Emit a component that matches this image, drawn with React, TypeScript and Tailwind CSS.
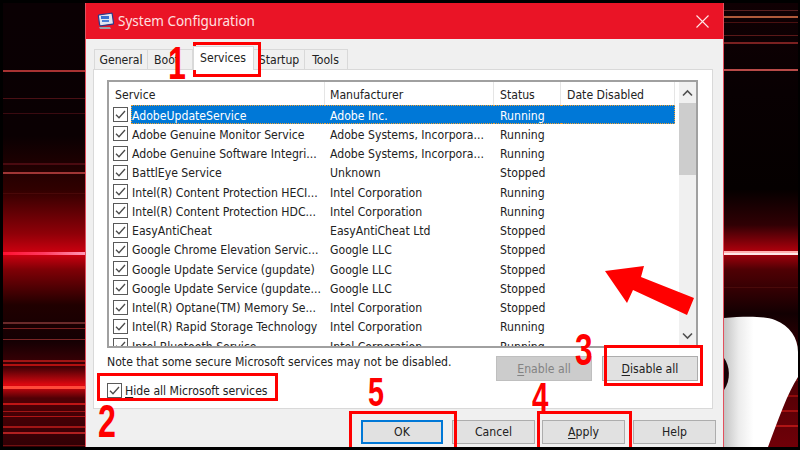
const rows: [string, string, string][] = [
  ["AdobeUpdateService", "Adobe Inc.", "Running"],
  ["Adobe Genuine Monitor Service", "Adobe Systems, Incorpora...", "Running"],
  ["Adobe Genuine Software Integri...", "Adobe Systems, Incorpora...", "Running"],
  ["BattlEye Service", "Unknown", "Stopped"],
  ["Intel(R) Content Protection HECI...", "Intel Corporation", "Running"],
  ["Intel(R) Content Protection HDC...", "Intel Corporation", "Running"],
  ["EasyAntiCheat", "EasyAntiCheat Ltd", "Stopped"],
  ["Google Chrome Elevation Servic...", "Google LLC", "Stopped"],
  ["Google Update Service (gupdate)", "Google LLC", "Stopped"],
  ["Google Update Service (gupdate...", "Google LLC", "Stopped"],
  ["Intel(R) Optane(TM) Memory Se...", "Intel Corporation", "Stopped"],
  ["Intel(R) Rapid Storage Technology", "Intel Corporation", "Running"],
  ["Intel Bluetooth Service", "Intel Corporation", "Running"],
];

function Check() {
  return (
    <span className="flex h-[15px] w-[15px] shrink-0 items-center justify-center border border-[#5a5a5a] bg-white">
      <svg width="13" height="13" viewBox="0 0 13 13" fill="none" stroke="#4a4a4a" strokeWidth="1.3">
        <path d="M2 6.8 5 9.8 11 3" />
      </svg>
    </span>
  );
}

function Wallpaper() {
  const left: [number, number, string][] = [
    [70, 2, "#a83232"], [98, 1, "#4a1015"], [113, 1, "#3a0a10"], [163, 2, "#4a0a10"], [172, 2, "#a03535"],
    [193, 1, "#4a0808"], [322, 2, "#6a2a2a"], [328, 1, "#7a2020"], [339, 1, "#7a2525"], [360, 2, "#a01515"],
    [364, 2, "#b01010"], [403, 2, "#c01515"], [411, 1, "#a01515"], [416, 1, "#b01515"], [426, 2, "#a01515"], [432, 2, "#b02020"], [445, 1, "#701010"],
  ];
  const right: [number, number, string][] = [
    [10, 1, "#5a2020"], [16, 2, "#b05a3a"], [22, 1, "#4a1010"], [35, 1, "#5a1818"], [42, 2, "#7a2020"], [69, 2, "#b84a48"],
    [287, 1, "#4a0a0a"], [380, 1, "#7a1010"], [395, 2, "#900c0c"], [410, 2, "#a01010"], [425, 2, "#b01515"],
  ];
  return (
    <svg className="absolute inset-0" width="800" height="450" viewBox="0 0 800 450">
      <defs>
        <linearGradient id="base" x1="0" y1="0" x2="0" y2="1">
          <stop offset="0" stopColor="#0a0003" />
          <stop offset="0.3" stopColor="#0a0002" />
          <stop offset="0.42" stopColor="#300000" />
          <stop offset="0.52" stopColor="#900008" />
          <stop offset="0.565" stopColor="#d00010" />
          <stop offset="0.6" stopColor="#800006" />
          <stop offset="0.68" stopColor="#200000" />
          <stop offset="0.76" stopColor="#140003" />
          <stop offset="0.82" stopColor="#400005" />
          <stop offset="0.86" stopColor="#e00810" />
          <stop offset="0.89" stopColor="#500005" />
          <stop offset="1" stopColor="#300005" />
        </linearGradient>
        <linearGradient id="baseR" x1="0" y1="0" x2="0" y2="1">
          <stop offset="0" stopColor="#100003" />
          <stop offset="0.2" stopColor="#080002" />
          <stop offset="0.42" stopColor="#050000" />
          <stop offset="0.5" stopColor="#300004" />
          <stop offset="0.56" stopColor="#b0000c" />
          <stop offset="0.6" stopColor="#500004" />
          <stop offset="0.7" stopColor="#120002" />
          <stop offset="0.85" stopColor="#500005" />
          <stop offset="1" stopColor="#700008" />
        </linearGradient>
        <linearGradient id="pink" x1="0" y1="0" x2="1" y2="0">
          <stop offset="0" stopColor="#ff1030" />
          <stop offset="0.5" stopColor="#ff3a60" />
          <stop offset="1" stopColor="#ff9ab8" />
        </linearGradient>
        <linearGradient id="shade" x1="0" y1="0" x2="1" y2="0">
          <stop offset="0" stopColor="#c4c4c4" />
          <stop offset="0.2" stopColor="#ececec" />
          <stop offset="0.4" stopColor="#ffffff" />
        </linearGradient>
      </defs>
      <rect x="3" y="3" width="82" height="444" fill="url(#base)" />
      <rect x="724" y="3" width="74" height="444" fill="url(#baseR)" />
      {left.map(([y, h, c], i) => <rect key={i} x="3" y={y} width="82" height={h} fill={c} />)}
      {right.map(([y, h, c], i) => <rect key={i} x="724" y={y} width="74" height={h} fill={c} />)}
      <rect x="3" y="252" width="82" height="3" fill="url(#pink)" />
      <rect x="3" y="386" width="82" height="3" fill="#ff4a3a" />
      <rect x="724" y="251" width="74" height="2" fill="#ffb0b0" />
      <rect x="724" y="253" width="74" height="2" fill="#ffe6e6" />
      <path d="M724 318 C745 316 765 316 775 320 C790 326 798 338 798 352 L798 377 C788 392 778 420 768 447 L724 447 Z" fill="url(#shade)" />
      <path d="M724 358 C730 366 731 380 724 390 Z" fill="#1a0005" />
    </svg>
  );
}

function Btn({ u, rest, className }: { u: string; rest: string; className: string }) {
  return (
    <div className={`flex items-center justify-center border pt-[1px] ${className}`}>
      <span className="underline underline-offset-2">{u}</span>
      {rest}
    </div>
  );
}

function Annotation({ n, className }: { n: string; className: string }) {
  return (
    <span className={`absolute origin-left scale-x-[0.7] leading-none font-bold text-[#ff0000] font-['Liberation_Sans',sans-serif] ${className}`}>
      {n}
    </span>
  );
}

const box = "absolute border-[3px] border-[#ff0000]";
const selected = "border-y border-dotted border-[#f0a030] bg-[#0078d7] text-white";

export default function App() {
  return (
    <div className="relative h-[450px] w-[800px] overflow-hidden bg-black pt-[3px] pl-[85px] font-['DejaVu_Sans_Condensed','Noto_Sans',sans-serif] text-[12.15px] text-[#222]">
      <Wallpaper />
      <div className="relative flex h-[444px] w-[639px] flex-col border-x border-[#e2505e] bg-[#f0f0f0]">
        <div className="flex h-[36px] shrink-0 items-center bg-[#ea1426] pr-[14px] pl-[10px] text-white">
          <svg width="18" height="18" viewBox="0 0 18 18">
            <rect x="3" y="2" width="14" height="11" rx="1" fill="#dfe6f0" stroke="#2b3a8a" strokeWidth="1.2" transform="rotate(-8 10 8)" />
            <rect x="5" y="4" width="8" height="3" fill="#3a6fd0" />
            <rect x="6" y="8" width="7" height="2" fill="#4a80d8" />
            <path d="M3 15h11l1 2H4z" fill="#9aa0a8" />
          </svg>
          <span className="ml-[4px] flex-1 font-['Noto_Sans',sans-serif] text-[13.5px] text-[#ffe0e0]">System Configuration</span>
          <svg width="13" height="13" viewBox="0 0 13 13" stroke="#ffe8e8" strokeWidth="1.1">
            <path d="M.5.5l12 12M12.5.5l-12 12" />
          </svg>
        </div>
        <div className="flex h-[30px] shrink-0 items-end pl-[8px]">
          <div className="flex h-[20px] w-[54px] items-center justify-center border border-b-0 border-[#d9d9d9] pt-[2px]">General</div>
          <div className="flex h-[20px] w-[45px] items-center justify-start border border-b-0 border-l-0 border-[#d9d9d9] pt-[2px] pl-[6px]">Boot</div>
          <div className="relative z-[1] -mb-px flex h-[24px] w-[61px] items-center justify-center border border-b-0 border-[#d9d9d9] bg-white pr-[1px] pb-[1px]">Services</div>
          <div className="flex h-[20px] w-[50px] items-center justify-center border-t border-[#d9d9d9] pt-[2px]">Startup</div>
          <div className="flex h-[20px] w-[44px] items-center justify-center border border-b-0 border-[#d9d9d9] pt-[2px] pr-[1px]">Tools</div>
        </div>
        <div className="relative mx-[7px] flex h-[340px] w-[620px] shrink-0 flex-col border border-[#d9d9d9] bg-white pt-[10px] pl-[13px]">
          <div className="flex h-[268px] w-[591px] shrink-0 overflow-hidden border-2 border-[#a0a0a0]">
            <div className="w-[567px] shrink-0 overflow-hidden">
              <div className="grid h-[23px] grid-cols-[216px_169px_67px_114px] items-center">
                <div className="h-full border-r border-[#e5e5e5] pt-[4px] pl-[6px]">Service</div>
                <div className="h-full border-r border-[#e5e5e5] pt-[4px] pl-[5px]">Manufacturer</div>
                <div className="h-full border-r border-[#e5e5e5] pt-[4px] pl-[6px]">Status</div>
                <div className="h-full border-r border-[#e5e5e5] pt-[4px] pl-[6px]">Date Disabled</div>
              </div>
              {rows.map(([a, b, c], i) => (
                <div key={a} className="grid h-[19.25px] grid-cols-[216px_169px_67px_114px] items-center">
                  <div className="flex items-center pl-[4px]">
                    <Check />
                    <span className={`ml-[3px] flex h-[19.25px] flex-1 items-center border-l whitespace-nowrap pt-[2px] ${i === 0 ? `${selected} border-l-[#f0a030]` : "border-transparent"}`}>{a}</span>
                  </div>
                  <div className={`flex h-[19.25px] items-center whitespace-nowrap pt-[2px] pl-[5px] ${i === 0 ? selected : ""}`}>{b}</div>
                  <div className={`flex h-[19.25px] items-center whitespace-nowrap pt-[2px] pl-[6px] ${i === 0 ? selected : ""}`}>{c}</div>
                  <div className={`h-[19.25px] ${i === 0 ? `${selected} border-r` : ""}`} />
                </div>
              ))}
            </div>
            <div className="ml-[3px] flex w-[18px] flex-col items-center bg-[#f0f0f0]">
              <svg className="mt-[7px]" width="11" height="8" viewBox="0 0 11 8" fill="none" stroke="#505050" strokeWidth="1.6"><path d="M1 6.5l4.5-4.5 4.5 4.5" /></svg>
              <div className="mt-[6px] h-[72px] w-full bg-[#cdcdcd]" />
              <div className="flex-1" />
              <svg className="mb-[6px]" width="11" height="8" viewBox="0 0 11 8" fill="none" stroke="#505050" strokeWidth="1.6"><path d="M1 1.5l4.5 4.5 4.5-4.5" /></svg>
            </div>
          </div>
          <div className="flex w-[591px] items-start">
            <div className="mt-[5px] flex-1">Note that some secure Microsoft services may not be disabled.</div>
            <div className="mt-[8px] flex gap-[10px]">
              <Btn u="E" rest="nable all" className="h-[25px] w-[96px] border-[#bfbfbf] bg-[#cccccc] text-[#838383]" />
              <Btn u="D" rest="isable all" className="h-[25px] w-[96px] border-[#adadad] bg-[#e1e1e1]" />
            </div>
          </div>
          <div className="-mt-[1px] flex items-center">
            <Check />
            <span className="ml-[3px] pt-[2px]"><span className="underline underline-offset-2">H</span>ide all Microsoft services</span>
          </div>
        </div>
        <div className="flex flex-1 items-start pt-[11px] pl-[275px]">
          <Btn u="" rest="OK" className="h-[24px] w-[82px] border-2 border-[#0078d7] bg-[#e1e1e1]" />
          <Btn u="" rest="Cancel" className="ml-[9px] h-[24px] w-[83px] border-[#adadad] bg-[#e1e1e1]" />
          <Btn u="A" rest="pply" className="ml-[7px] h-[24px] w-[83px] border-[#adadad] bg-[#e1e1e1]" />
          <Btn u="" rest="Help" className="ml-[8px] h-[24px] w-[83px] border-[#adadad] bg-[#e1e1e1]" />
        </div>
      </div>

      <div className={`${box} top-[42px] left-[193px] h-[35px] w-[68px]`} />
      <div className={`${box} top-[373px] left-[97px] h-[28px] w-[181px]`} />
      <div className={`${box} top-[345px] left-[604px] h-[41px] w-[99px]`} />
      <div className={`${box} top-[411px] left-[349px] h-[36px] w-[108px] border-b-0`} />
      <div className={`${box} top-[411px] left-[537px] h-[36px] w-[95px] border-b-0`} />
      <Annotation n="1" className="top-[40px] left-[168px] text-[46px]" />
      <Annotation n="2" className="top-[398px] left-[98px] text-[46px]" />
      <Annotation n="3" className="top-[327px] left-[575px] text-[45px]" />
      <Annotation n="4" className="top-[377px] left-[532px] text-[42px]" />
      <Annotation n="5" className="top-[372px] left-[368px] text-[41px]" />
      <svg className="absolute top-[260px] left-[600px]" width="100" height="60" viewBox="600 260 100 60">
        <path d="M605 271 644 266 641 277 694 298 687 315 633 290 627 303Z" fill="#ff0000" />
      </svg>
    </div>
  );
}
